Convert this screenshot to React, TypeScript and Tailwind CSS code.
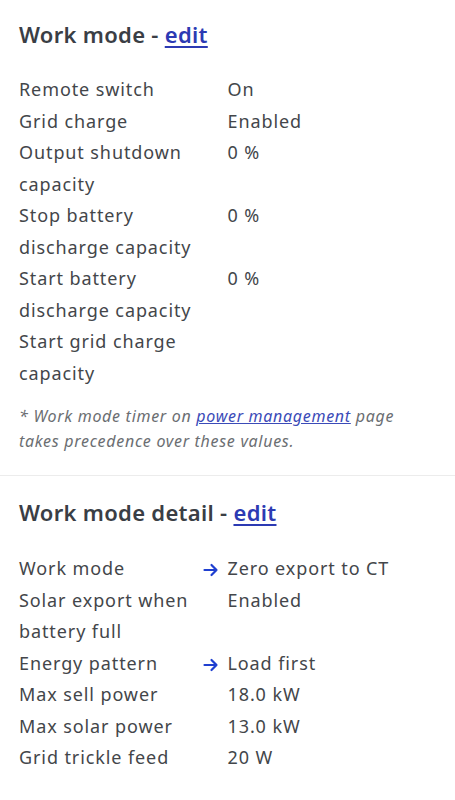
import React from "react";

type Row = { label: string; value: string; arrow?: boolean };

const workMode: Row[] = [
  { label: "Remote switch", value: "On" },
  { label: "Grid charge", value: "Enabled" },
  { label: "Output shutdown capacity", value: "0 %" },
  { label: "Stop battery discharge capacity", value: "0 %" },
  { label: "Start battery discharge capacity", value: "0 %" },
  { label: "Start grid charge capacity", value: "" },
];

const workModeDetail: Row[] = [
  { label: "Work mode", value: "Zero export to CT", arrow: true },
  { label: "Solar export when battery full", value: "Enabled" },
  { label: "Energy pattern", value: "Load first", arrow: true },
  { label: "Max sell power", value: "18.0 kW" },
  { label: "Max solar power", value: "13.0 kW" },
  { label: "Grid trickle feed", value: "20 W" },
];

function Arrow() {
  return (
    <svg
      viewBox="0 0 16 16"
      className="absolute left-[-25px] top-[9px] h-[16px] w-[16px] text-[#1f3fd0]"
      fill="none"
      stroke="currentColor"
      strokeWidth="2.2"
      strokeLinecap="round"
      strokeLinejoin="round"
    >
      <path d="M1.5 8h12M8.5 3l5 5-5 5" />
    </svg>
  );
}

function Table({ rows }: { rows: Row[] }) {
  return (
    <table className="w-full table-fixed border-collapse">
      <tbody>
        {rows.map((r) => (
          <tr key={r.label}>
            <td className="w-1/2 pr-[14px] align-top">{r.label}</td>
            <td className="relative w-1/2 align-top">
              {r.arrow && <Arrow />}
              {r.value}
            </td>
          </tr>
        ))}
      </tbody>
    </table>
  );
}

function Heading({ title }: { title: string }) {
  return (
    <h2 className="text-[22px] font-semibold leading-[28px] tracking-[0.3px] text-[#3a3e45]">
      {title} -{" "}
      <a href="#" className="text-[#2c3ab3] underline underline-offset-[3px]">
        edit
      </a>
    </h2>
  );
}

export default function App() {
  return (
    <div className="min-h-screen bg-white font-['Noto_Sans',sans-serif] text-[18px] leading-[31.5px] tracking-[0.9px] text-[#43464a]">
      <section className="border-b border-[#ececec] px-[19px] pb-[21px] pt-[20px]">
        <Heading title="Work mode" />
        <div className="mt-[26px]">
          <Table rows={workMode} />
        </div>
        <p className="mt-[15px] text-[16px] italic leading-[25px] tracking-[0.7px] text-[#6b6e72]">
          * Work mode timer on{" "}
          <a href="#" className="text-[#3b4bb8] underline">
            power management
          </a>{" "}
          page takes precedence over these values.
        </p>
      </section>
      <section className="px-[19px] pb-[24px] pt-[22px]">
        <Heading title="Work mode detail" />
        <div className="mt-[27px]">
          <Table rows={workModeDetail} />
        </div>
      </section>
    </div>
  );
}
